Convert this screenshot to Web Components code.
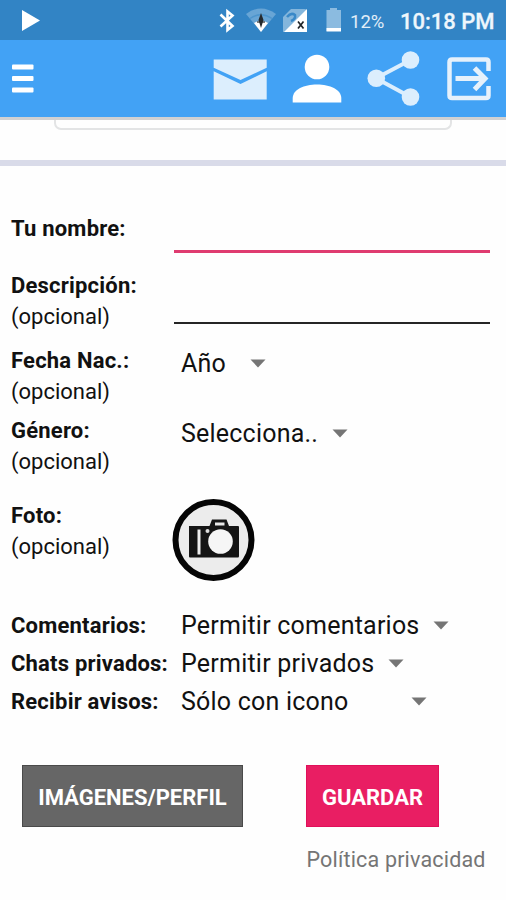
<!DOCTYPE html>
<html lang="es">
<head>
<meta charset="utf-8">
<title>Perfil</title>
<style>
html{background:#fefefe}
body{margin:0;background:#fefefe;font-family:Roboto,"Liberation Sans",sans-serif;color:#111;width:506px;height:900px;overflow:hidden}
</style>
</head>
<body>
<profile-screen></profile-screen>
<script>
const define=(name,html,setup)=>customElements.define(name,class extends HTMLElement{
  connectedCallback(){
    if(this.shadowRoot)return;
    const t=document.createElement('template');t.innerHTML=html;
    this.attachShadow({mode:'open'}).appendChild(t.content.cloneNode(true));
    if(setup)setup(this,this.shadowRoot);
  }
});

define('status-bar',`
<style>
:host{display:flex;align-items:center;height:40px;background:#3284c5;color:#eef6fc;box-sizing:border-box}
svg{display:block;flex:none}
.play{margin-left:21px;margin-right:auto}
.pct{font-size:18.500px;letter-spacing:0;width:37px;margin-left:8px;line-height:38px;padding-top:3px;height:37px;white-space:nowrap;color:#e1eef8}
.time{font-size:22px;font-weight:500;width:96px;margin:0 10px 0 13px;line-height:38px;padding-top:3px;height:37px;white-space:nowrap;-webkit-text-stroke:.3px}
</style>
<svg class="play" width="20" height="40"><path d="M1 10L19 20.5L1 31Z" fill="#fff"/></svg>
<svg width="124" height="40" viewBox="217 0 124 40">
<path d="M219.500 14.500L231.500 26L226.500 30V11.500L231.500 15.500L219.500 26.500" fill="none" stroke="#fff" stroke-width="2.600"/>
<path d="M245 14Q260 3 275 14L260 32Z" fill="#68a5d5"/>
<path d="M249 18.500Q260 11 271 18.500" fill="none" stroke="#4d95cd" stroke-width="1.500"/>
<path d="M253 23Q260 18.500 267 23L260 32Z" fill="#fff"/>
<path d="M260 13L262.500 20L260 28L257.500 20Z" fill="#252a2e"/><path d="M256 22H264" stroke="#252a2e" stroke-width="1.200"/>
<path d="M282 32V17L290 9H303.500Q306 9 306 11V32Z" fill="#84b6dc"/>
<path d="M286 17Q290 12 294 15Q295 19 290 21" fill="none" stroke="#3989c8" stroke-width="2.500"/>
<path d="M283 32L306 9V32Z" fill="#fff"/>
<path d="M297 21.500L302.500 28.500M302.500 21.500L297 28.500" stroke="#202428" stroke-width="1.700"/>
<path d="M325.500 10H329V8H336V10H340V31H325.500Z" fill="#8bbbe0"/><path d="M325.500 28H340V31.500H325.500Z" fill="#fff"/>
</svg>
<span class="pct">12%</span><span class="time">10:18 PM</span>`);

define('app-bar',`
<style>
:host{display:flex;align-items:center;justify-content:space-between;height:77px;background:#42a2f5;border-bottom:3px solid #d0d1d3;box-sizing:content-box}
svg{display:block}
</style>
<svg width="40" height="77" viewBox="0 40 40 77"><g fill="#fff"><rect x="12" y="64.500" width="21.500" height="5" rx="1"/><rect x="12" y="76" width="21.500" height="5" rx="1"/><rect x="12" y="87.500" width="21.500" height="5" rx="1"/></g></svg>
<svg width="296" height="77" viewBox="210 40 296 77">
<g fill="#dceefd"><path d="M213.700 59.500H266.700V67.800L240.500 80L213.700 67.800Z"/><path d="M213.700 71.300L240.500 84L266.700 71.300V99.500H213.700Z"/></g>
<g fill="#fff"><circle cx="317" cy="67" r="12.300"/><path d="M292.700 102.500V98C293 89.500 304 84.500 317 84.500S341 89.500 341.300 98V102.500Z"/></g>
<g fill="#dceefd"><path d="M410.500 60L376 78.300L410.500 97" fill="none" stroke="#dceefd" stroke-width="4"/><circle cx="410.500" cy="60" r="8.800"/><circle cx="376.300" cy="78.300" r="8.800"/><circle cx="410.500" cy="97" r="8.800"/></g>
<g fill="none" stroke="#e6f1fb"><path d="M488.500 71V62Q488.500 59.500 486 59.500H452Q449.500 59.500 449.500 62V95.500Q449.500 98 452 98H486Q488.500 98 488.500 95.500V86" stroke-width="4.500"/><path d="M455.500 78.500H485M474.500 68L485 78.500L474.500 89.500" stroke-width="5"/></g>
</svg>`);

define('card-edge',`
<style>
:host{display:flex;flex-direction:column;align-items:center;height:40px;border-bottom:6px solid #d9dbe9}
div{box-sizing:border-box;width:398px;height:10px;border:2px solid #e3e4e5;border-top:0;border-radius:0 0 7px 7px}
</style><div></div>`);

define('form-row',`
<style>
:host{display:grid;grid-template-columns:163px 316px;padding-left:11px;align-items:start;box-sizing:border-box;font-size:22px;line-height:31px}
.l{display:flex;flex-direction:column;white-space:nowrap}
b{font-weight:700;letter-spacing:.2px}
:host([tight]) .l{line-height:38px}
</style>
<div class="l"><b></b><span></span></div><slot></slot>`,(h,r)=>{
  r.querySelector('b').textContent=h.getAttribute('label');
  if(h.hasAttribute('optional'))r.querySelector('span').textContent='(opcional)';
});

define('text-field',`
<style>:host{display:block;box-sizing:border-box;width:315.500px;border-bottom:2px solid #252525}
:host([focused]){border-bottom:3px solid #df3b70}</style>`);

define('drop-down',`
<style>
:host{display:flex;align-items:flex-start;padding-left:7px;font-size:25px;line-height:38px;white-space:nowrap;height:38px}
span{letter-spacing:.22px}
svg{display:block;margin-top:14px;flex:none}
</style>
<span><slot></slot></span><svg width="16" height="9"><path d="M.5 .5H15.500L8 8.500Z" fill="#757575"/></svg>`,(h,r)=>{
  r.querySelector('span').style.width=h.getAttribute('w')+'px';
});

define('camera-button',`
<style>:host{display:block;height:82px;margin-left:-2px}svg{display:block}</style>
<svg width="83" height="82" viewBox="172 499 83 82">
<circle cx="213.500" cy="540" r="38" fill="#ececec" stroke="#050505" stroke-width="6"/>
<path d="M189 526H209.500L212 519.500H226.500L229 526H238Q239 526 239 527V556Q239 557.500 238 557.500H190Q189 557.500 189 556.500Z" fill="#151515"/>
<rect x="215" y="522.500" width="9.500" height="3" fill="#e8e8e8"/>
<rect x="197.500" y="529.500" width="3" height="25" fill="#eee"/><circle cx="207.500" cy="531" r="2" fill="#ddd"/>
<circle cx="220.500" cy="541.500" r="12.300" fill="#f6f6f6"/></svg>`);

define('flat-button',`
<style>
:host{display:flex;align-items:center;justify-content:center;height:62px;box-sizing:border-box;background:#666;border:1px solid #4a4a4a;color:#fff;font-size:22px;font-weight:700;white-space:nowrap;padding-top:2px}
:host([primary]){background:#e91e63;border-color:#e0105a}
</style><slot></slot>`);

define('profile-screen',`
<style>
:host{display:flex;flex-direction:column;width:506px;height:900px}
.form{display:flex;flex-direction:column;padding-top:47px}
.prefs{display:flex;flex-direction:column;padding-top:1px}
.actions{display:flex;margin-top:44px;padding-left:22px;gap:63px}
.link{margin:17px 0 0 306.500px;font-size:21.500px;letter-spacing:.18px;line-height:31px;color:#757575;white-space:nowrap}
</style>
<status-bar></status-bar><app-bar></app-bar><card-edge></card-edge>
<div class="form">
<form-row label="Tu nombre:" style="height:57px"><text-field focused style="height:40px"></text-field></form-row>
<form-row label="Descripción:" optional style="height:75px"><text-field style="height:54px"></text-field></form-row>
<form-row label="Fecha Nac.:" optional style="height:69.500px"><drop-down w="69">Año</drop-down></form-row>
<form-row label="Género:" optional style="height:85.500px"><drop-down w="151">Selecciona..</drop-down></form-row>
<form-row label="Foto:" optional style="height:106px"><camera-button style="margin-top:-1px"></camera-button></form-row>
<div class="prefs">
<form-row tight label="Comentarios:" style="height:38px"><drop-down w="252">Permitir comentarios</drop-down></form-row>
<form-row tight label="Chats privados:" style="height:38px"><drop-down w="207">Permitir privados</drop-down></form-row>
<form-row tight label="Recibir avisos:" style="height:38px"><drop-down w="230">Sólo con icono</drop-down></form-row>
</div>
</div>
<div class="actions"><flat-button style="width:221px">IMÁGENES/PERFIL</flat-button><flat-button primary style="width:133px">GUARDAR</flat-button></div>
<div class="link">Política privacidad</div>`);
</script>
</body>
</html>
